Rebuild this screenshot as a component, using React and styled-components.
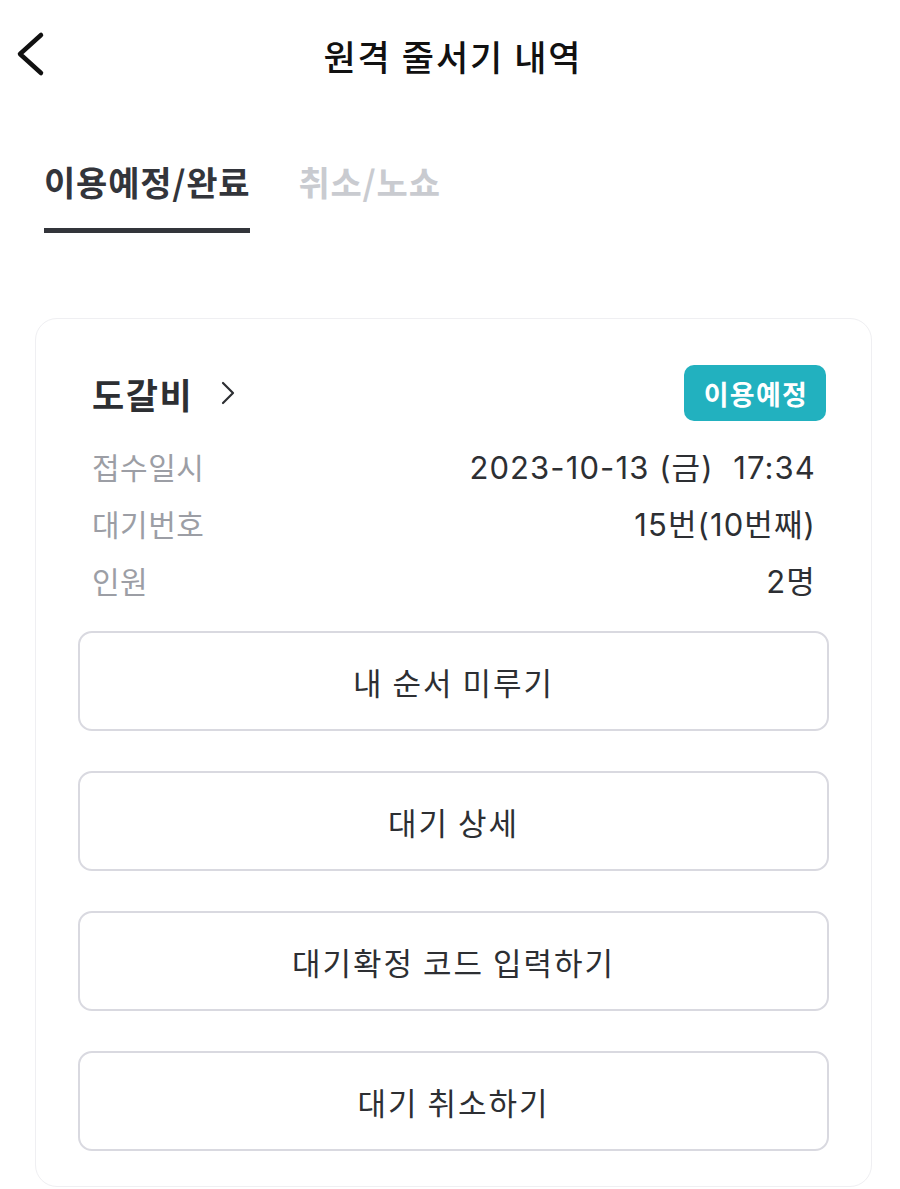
import React from "react";
import styled, { createGlobalStyle } from "styled-components";

const GlobalStyle = createGlobalStyle`
  body {
    margin: 0;
    background: #ffffff;
    font-family: "Noto Sans CJK KR", "Noto Sans", sans-serif;
    color: #2d2f33;
  }
`;

const rows = [
  { label: "접수일시", value: "2023-10-13 (금)\u00a0\u00a017:34" },
  { label: "대기번호", value: "15번(10번째)" },
  { label: "인원", value: "2명" },
];

const actions = ["내 순서 미루기", "대기 상세", "대기확정 코드 입력하기", "대기 취소하기"];

function App() {
  return (
    <Page>
      <GlobalStyle />
      <Header>
        <BackButton aria-label="뒤로">
          <svg width="32" height="46" viewBox="0 0 32 46" fill="none">
            <path
              d="M26 4 L5 23 L26 42"
              stroke="#111"
              strokeWidth="4.5"
              strokeLinecap="round"
              strokeLinejoin="round"
            />
          </svg>
        </BackButton>
        <Title>원격 줄서기 내역</Title>
        <span />
      </Header>

      <Tabs>
        <Tab $active>이용예정/완료</Tab>
        <Tab>취소/노쇼</Tab>
      </Tabs>

      <Card>
        <CardHead>
          <StoreName>
            도갈비
            <svg width="16" height="26" viewBox="0 0 16 26" fill="none">
              <path
                d="M3 3 L13 13 L3 23"
                stroke="#2d2f33"
                strokeWidth="2.2"
                strokeLinecap="round"
                strokeLinejoin="round"
              />
            </svg>
          </StoreName>
          <Badge>이용예정</Badge>
        </CardHead>

        <InfoList>
          {rows.map((r) => (
            <InfoRow key={r.label}>
              <Label>{r.label}</Label>
              <Value>{r.value}</Value>
            </InfoRow>
          ))}
        </InfoList>

        <Actions>
          {actions.map((a) => (
            <ActionButton key={a}>{a}</ActionButton>
          ))}
        </Actions>
      </Card>
    </Page>
  );
}

const Page = styled.div`
  width: 900px;
  min-height: 1189px;
  overflow: hidden;
`;

const Header = styled.header`
  height: 110px;
  display: grid;
  grid-template-columns: 1fr auto 1fr;
  align-items: center;
  padding: 0 14px 0 20px;
  box-sizing: border-box;
`;

const BackButton = styled.button`
  background: none;
  border: none;
  padding: 0;
  margin: -2px 0 0 -5px;
  width: 32px;
  height: 46px;
  display: flex;
  align-items: center;
  justify-self: start;
`;

const Title = styled.h1`
  margin: 0;
  font-size: 35px;
  font-weight: 500;
  color: #111;
  letter-spacing: 2px;
`;

const Tabs = styled.nav`
  display: flex;
  gap: 48px;
  padding: 52px 0 0 44px;
`;

const Tab = styled.div`
  font-size: 34px;
  line-height: 40px;
  font-weight: 700;
  letter-spacing: 0.8px;
  padding-bottom: 26px;
  color: ${(p) => (p.$active ? "#33353b" : "#c9cbd0")};
  border-bottom: 5px solid ${(p) => (p.$active ? "#33353b" : "transparent")};
`;

const Card = styled.section`
  margin: 85px 0 0 35px;
  width: 837px;
  box-sizing: border-box;
  border: 1.5px solid #efeff2;
  border-radius: 22px;
  padding: 46px 42px 35px;
`;

const CardHead = styled.div`
  display: flex;
  justify-content: space-between;
  align-items: center;
  height: 56px;
  padding: 0 3px 0 14px;
`;

const StoreName = styled.div`
  display: flex;
  align-items: center;
  gap: 27px;
  font-size: 35px;
  font-weight: 700;
  letter-spacing: 1.5px;
  color: #2d2f33;
`;

const Badge = styled.span`
  background: #22b1bf;
  color: #fff;
  font-size: 27px;
  font-weight: 700;
  letter-spacing: 1.2px;
  height: 56px;
  padding: 0 18px 0 20px;
  border-radius: 10px;
  display: flex;
  align-items: center;
`;

const InfoList = styled.div`
  margin-top: 16px;
  padding: 0 13px 0 14px;
`;

const InfoRow = styled.div`
  display: flex;
  justify-content: space-between;
  align-items: center;
  height: 57px;
  font-size: 30px;
`;

const Label = styled.span`
  color: #9c9ea5;
  letter-spacing: 0.5px;
`;

const Value = styled.span`
  font-family: "Inter", "Noto Sans CJK KR", sans-serif;
  font-size: 31px;
  letter-spacing: 1.1px;
  color: #2d2f33;
`;

const Actions = styled.div`
  margin-top: 23px;
  display: flex;
  flex-direction: column;
  gap: 40px;
`;

const ActionButton = styled.button`
  height: 100px;
  width: 100%;
  background: #fff;
  border: 2px solid #d9d9e0;
  border-radius: 14px;
  font-family: inherit;
  font-size: 31px;
  letter-spacing: 2px;
  color: #2d2f33;
`;

export default App;
